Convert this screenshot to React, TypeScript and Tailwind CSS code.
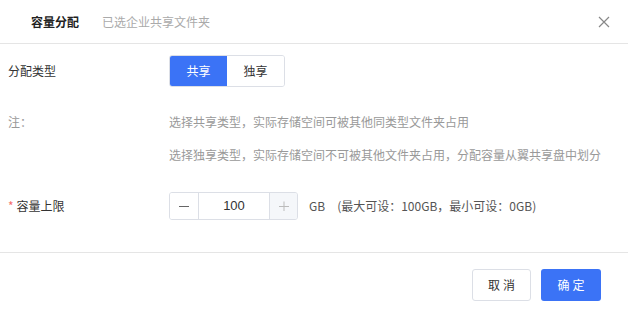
import { useState } from 'react';

const font = { fontFamily: '"Noto Sans CJK SC", "Liberation Sans", sans-serif' };

const App = () => {
  const [type, setType] = useState<'share' | 'own'>('share');
  const [size, setSize] = useState(100);

  return (
    <div className="w-[628px] h-[312px] bg-white text-[12px] text-[#333]" style={font}>
      {/* header */}
      <div className="h-[44px] border-b border-[#e5e5e5] flex items-center pl-[31px] pr-[18px]">
        <div className="font-semibold text-[#222] leading-none">容量分配</div>
        <div className="ml-[23px] text-[#aaa] leading-none">已选企业共享文件夹</div>
        <button className="ml-auto w-[12px] h-[12px] flex items-center justify-center text-[#888]">
          <svg width="12" height="12" viewBox="0 0 12 12" fill="none" stroke="currentColor" strokeWidth="1.2">
            <path d="M1 1L11 11M11 1L1 11" />
          </svg>
        </button>
      </div>

      {/* body */}
      <div className="h-[209px] border-b border-[#e5e5e5] pl-[8px]">
        <div className="flex items-center pt-[11px]">
          <div className="w-[161px] leading-none">分配类型</div>
          <div className="flex h-[32px] rounded-[3px] border border-[#dcdfe6] overflow-hidden">
            <button
              onClick={() => setType('share')}
              className={
                type === 'share'
                  ? 'w-[57px] bg-[#3b73f6] text-white'
                  : 'w-[57px] bg-white text-[#333]'
              }
            >
              共享
            </button>
            <button
              onClick={() => setType('own')}
              className={
                type === 'own'
                  ? 'w-[57px] bg-[#3b73f6] text-white'
                  : 'w-[57px] bg-white text-[#333]'
              }
            >
              独享
            </button>
          </div>
        </div>

        <div className="flex mt-[29px] text-[#999]">
          <div className="w-[161px] leading-none">注：</div>
          <div className="flex flex-col gap-[21px] leading-none">
            <div>选择共享类型，实际存储空间可被其他同类型文件夹占用</div>
            <div>选择独享类型，实际存储空间不可被其他文件夹占用，分配容量从翼共享盘中划分</div>
          </div>
        </div>

        <div className="flex items-center mt-[31px]">
          <div className="w-[161px] leading-none flex items-center">
            <span className="text-[#f56c6c] mr-[3px]">*</span>
            <span>容量上限</span>
          </div>
          <div className="flex h-[28px] w-[129px] rounded-[3px] border border-[#dcdfe6] overflow-hidden">
            <button
              onClick={() => setSize(Math.max(0, size - 1))}
              className="w-[29px] border-r border-[#dcdfe6] bg-white text-[#666] flex items-center justify-center"
            >
              <svg width="10" height="10" viewBox="0 0 10 10" stroke="currentColor" strokeWidth="1">
                <path d="M0 5.5H10" />
              </svg>
            </button>
            <div className="flex-1 flex items-center justify-center text-[13px] text-[#333]" style={{ fontFamily: '"Liberation Sans", sans-serif' }}>
              {size}
            </div>
            <button
              onClick={() => setSize(Math.min(100, size + 1))}
              className="w-[28px] border-l border-[#dcdfe6] bg-[#f5f7fa] text-[#bbb] flex items-center justify-center"
            >
              <svg width="10" height="10" viewBox="0 0 10 10" stroke="currentColor" strokeWidth="1">
                <path d="M0 5.5H10M5 0.5V10.5" />
              </svg>
            </button>
          </div>
          <div className="ml-[11px] text-[#555] leading-none flex">
            <span>GB</span>
            <span className="ml-[12px]">(最大可设：100GB，最小可设：0GB)</span>
          </div>
        </div>
      </div>

      {/* footer */}
      <div className="flex justify-end gap-[10px] pr-[27px] pt-[16px]">
        <button className="w-[59px] h-[32px] rounded-[3px] border border-[#dcdfe6] bg-white text-[#333] tracking-[3px] pl-[3px]">
          取消
        </button>
        <button className="w-[60px] h-[32px] rounded-[3px] bg-[#3b73f6] text-white tracking-[3px] pl-[3px]">
          确定
        </button>
      </div>
    </div>
  );
};

export default App;
